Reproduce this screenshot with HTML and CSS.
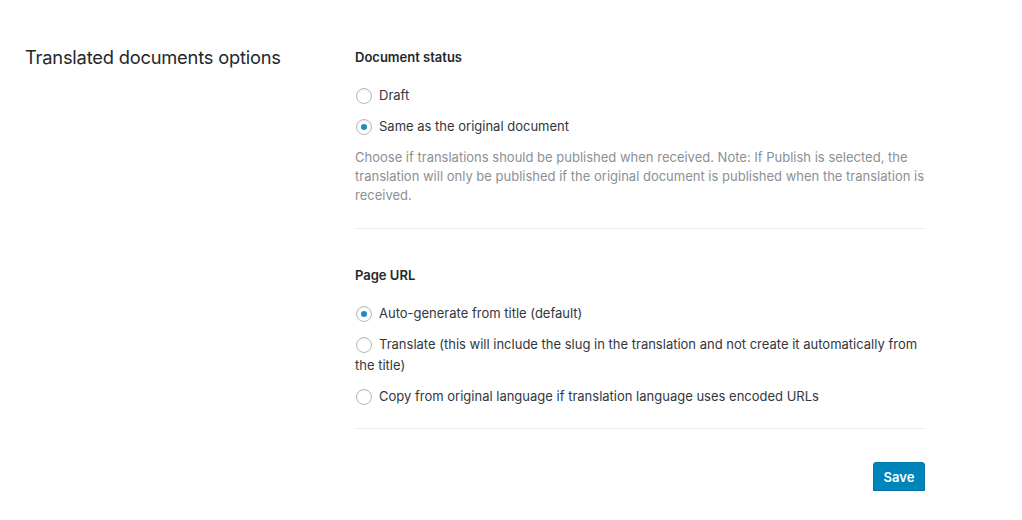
FILE: index.html
```html
<!DOCTYPE html>
<html>
<head>
<meta charset="utf-8">
<link rel="stylesheet" href="styles.css">
</head>
<body>
<div class="page">
  <div class="side">
    <h2 class="side-title">Translated documents options</h2>
  </div>
  <div class="main">
    <section class="group first">
      <h3 class="group-title">Document status</h3>
      <label class="opt"><span class="radio"></span>Draft</label>
      <label class="opt"><span class="radio checked"></span>Same as the original document</label>
      <p class="desc">Choose if translations should be published when received. Note: If Publish is selected, the translation will only be published if the original document is published when the translation is received.</p>
    </section>
    <section class="group second">
      <h3 class="group-title">Page URL</h3>
      <label class="opt"><span class="radio checked"></span>Auto-generate from title (default)</label>
      <label class="opt"><span class="radio"></span>Translate (this will include the slug in the translation and not create it automatically from the title)</label>
      <label class="opt"><span class="radio"></span>Copy from original language if translation language uses encoded URLs</label>
    </section>
    <div class="actions">
      <button class="btn-save">Save</button>
    </div>
  </div>
</div>
</body>
</html>
```

FILE: styles.css
```css
html, body {
  margin: 0;
  padding: 0;
  background: #fff;
}
body {
  font-family: "Inter", "Liberation Sans", sans-serif;
  color: #32373c;
  font-size: 13px;
}
.page {
  display: flex;
  width: 925px;
}
.side {
  width: 355px;
  padding-left: 25px;
  padding-top: 43px;
  box-sizing: border-box;
  flex: none;
}
.side-title {
  margin: 0;
  font-size: 18.3px;
  line-height: 28px;
  font-weight: 400;
  color: #23282d;
  letter-spacing: -0.2px;
}
.main {
  flex: 1;
  padding-top: 48px;
}
.group {
  border-bottom: 1px solid #eeeeee;
}
.group.first {
  padding-bottom: 23px;
}
.group.second {
  padding-top: 37px;
  padding-bottom: 21px;
}
.group-title {
  margin: 0 0 18px;
  font-size: 13px;
  line-height: 19px;
  font-weight: 600;
  color: #23282d;
}
.opt {
  display: block;
  line-height: 21px;
  margin-bottom: 10px;
  color: #32373c;
}
.group.second .opt:last-child {
  margin-bottom: 0;
}
.radio {
  display: inline-block;
  box-sizing: border-box;
  width: 16px;
  height: 16px;
  border: 1px solid #b4b9be;
  border-radius: 50%;
  background: #fff;
  box-shadow: inset 0 1px 2px rgba(0, 0, 0, 0.07);
  vertical-align: -4px;
  margin: 0 7px 0 1px;
  position: relative;
}
.radio.checked::before {
  content: "";
  position: absolute;
  left: 4px;
  top: 4px;
  width: 6px;
  height: 6px;
  border-radius: 50%;
  background: #1e8cbe;
}
.desc {
  margin: 11px 0 0;
  line-height: 19px;
  color: #8c8f94;
}
.actions {
  display: flex;
  justify-content: flex-end;
  padding-top: 33px;
}
.btn-save {
  font-family: inherit;
  font-size: 13px;
  font-weight: 600;
  color: #fff;
  background: #0085ba;
  border: 1px solid #0073aa;
  border-radius: 3px;
  box-shadow: 0 1px 0 #006799;
  height: 29px;
  width: 52px;
  padding: 0;
  cursor: pointer;
}
```
